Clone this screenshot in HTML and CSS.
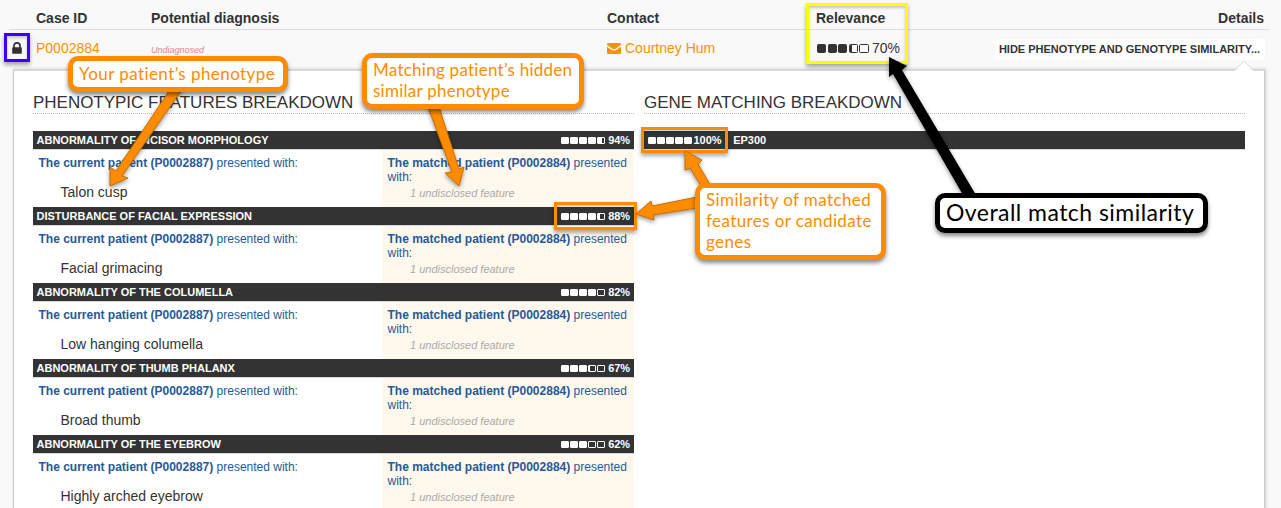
FILE: index.html
```html
<!DOCTYPE html>
<html lang="en">
<head>
<meta charset="utf-8">
<title>Patient similarity</title>
<link rel="stylesheet" href="styles.css">
</head>
<body>
<main class="page">
  <div class="grid-row head">
    <span></span><span>Case ID</span><span>Potential diagnosis</span><span>Contact</span><span>Relevance</span><span class="end">Details</span>
  </div>
  <div class="grid-row entry">
    <span class="lock"><svg width="10" height="12" viewBox="0 0 10 12"><path d="M2 6V3.8a3 3 0 0 1 6 0V6" fill="none" stroke="#333" stroke-width="1.7"/><rect x="0.2" y="5.3" width="9.6" height="6.4" rx=".7" fill="#333"/></svg></span>
    <a class="link">P0002884</a>
    <span class="undiagnosed">Undiagnosed</span>
    <a class="link contact"><svg width="14" height="11" viewBox="0 0 14 11"><path d="M0 1.2Q0 0 1.2 0H12.8Q14 0 14 1.2 14 2 12.5 3.1L8.2 6.1Q7 7 5.8 6.1L1.5 3.1Q0 2 0 1.2ZM0 3.4Q.5 3.9 5 7Q7 8.4 9 7Q13.5 3.9 14 3.4V9.8Q14 11 12.8 11H1.2Q0 11 0 9.8Z" fill="#f79300"/></svg>Courtney Hum</a>
    <span class="score dark"><i class="f"></i><i class="f"></i><i class="f"></i><i class="h"></i><i></i><b>70%</b></span>
    <span class="end"><button class="toggle">HIDE PHENOTYPE AND GENOTYPE SIMILARITY...</button></span>
  </div>
  <div class="panel">
    <section class="phenotypes">
      <h2>PHENOTYPIC FEATURES BREAKDOWN</h2>
      <article>
        <h3>ABNORMALITY OF INCISOR MORPHOLOGY<span class="score"><i class="f"></i><i class="f"></i><i class="f"></i><i class="f"></i><i class="m"></i><b>94%</b></span></h3>
        <div class="pair"><div class="mine"><p><b>The current patient (P0002887)</b> presented with:</p><div class="feature">Talon cusp</div></div><div class="theirs"><p><b>The matched patient (P0002884)</b> presented with:</p><em>1 undisclosed feature</em></div></div>
      </article>
      <article>
        <h3>DISTURBANCE OF FACIAL EXPRESSION<span class="score"><i class="f"></i><i class="f"></i><i class="f"></i><i class="f"></i><i class="h"></i><b>88%</b></span></h3>
        <div class="pair"><div class="mine"><p><b>The current patient (P0002887)</b> presented with:</p><div class="feature">Facial grimacing</div></div><div class="theirs"><p><b>The matched patient (P0002884)</b> presented with:</p><em>1 undisclosed feature</em></div></div>
      </article>
      <article>
        <h3>ABNORMALITY OF THE COLUMELLA<span class="score"><i class="f"></i><i class="f"></i><i class="f"></i><i class="f"></i><i></i><b>82%</b></span></h3>
        <div class="pair"><div class="mine"><p><b>The current patient (P0002887)</b> presented with:</p><div class="feature">Low hanging columella</div></div><div class="theirs"><p><b>The matched patient (P0002884)</b> presented with:</p><em>1 undisclosed feature</em></div></div>
      </article>
      <article>
        <h3>ABNORMALITY OF THUMB PHALANX<span class="score"><i class="f"></i><i class="f"></i><i class="f"></i><i class="q"></i><i></i><b>67%</b></span></h3>
        <div class="pair"><div class="mine"><p><b>The current patient (P0002887)</b> presented with:</p><div class="feature">Broad thumb</div></div><div class="theirs"><p><b>The matched patient (P0002884)</b> presented with:</p><em>1 undisclosed feature</em></div></div>
      </article>
      <article>
        <h3>ABNORMALITY OF THE EYEBROW<span class="score"><i class="f"></i><i class="f"></i><i class="f"></i><i></i><i></i><b>62%</b></span></h3>
        <div class="pair"><div class="mine"><p><b>The current patient (P0002887)</b> presented with:</p><div class="feature">Highly arched eyebrow</div></div><div class="theirs"><p><b>The matched patient (P0002884)</b> presented with:</p><em>1 undisclosed feature</em></div></div>
      </article>
    </section>
    <section class="genes">
      <h2>GENE MATCHING BREAKDOWN</h2>
      <h3><span class="score"><i class="f"></i><i class="f"></i><i class="f"></i><i class="f"></i><i class="f"></i><b>100%</b></span><span class="gene">EP300</span></h3>
    </section>
  </div>
</main>
<svg class="pointer" width="18" height="11" viewBox="0 0 18 11"><path d="M0 11 9 1 18 11Z" fill="#fff"/><path d="M0 10 9 1 18 10" fill="none" stroke="#ddd"/></svg>
<div class="frame lock-frame"></div>
<div class="frame relevance-frame"></div>
<div class="frame score-frame"></div>
<div class="frame gene-frame"></div>
<svg class="arrows" width="1281" height="508" viewBox="0 0 1281 508">
  <g fill="#ff8c00" stroke="#c96f00" stroke-width="1" stroke-linejoin="round">
    <path d="M171 88 116 171 110 167 110 186 128 178 122 176 183 88Z"/>
    <path d="M427 104 452 172 445 173 459 186 464 167 459 169 438 104Z"/>
    <path d="M697 197 652 206 651 201 636 214 654 220 653 215 697 208Z"/>
    <path d="M701 186 690 168 685 170 685 151 702 160 698 164 711 186Z"/>
  </g>
  <path d="M963 195 893 74 889 77 889 57 907 66 902 70 976 195Z" fill="#000"/>
</svg>
<div class="callout yours"><span>Your patient’s phenotype</span></div>
<div class="callout hidden"><span>Matching patient’s hidden</span><span>similar phenotype</span></div>
<div class="callout matched"><span>Similarity of matched</span><span>features or candidate</span><span>genes</span></div>
<div class="callout overall"><span>Overall match similarity</span></div>
</body>
</html>
```
FILE: styles.css
```css
* { box-sizing: border-box; }
body { margin: 0; width: 1281px; height: 508px; overflow: hidden; position: relative; background: #f9f9f9; color: #333; font: 14px/18px "Liberation Sans", Arial, sans-serif; }
h2, h3, p { margin: 0; }
span, a { white-space: nowrap; }
.page { padding: 0 12px 0 9px; }
.grid-row { display: grid; grid-template-columns: 27px 115px 456px 209px 210px minmax(0, 1fr); align-items: center; }
.head { height: 30px; padding-top: 6px; border-bottom: 1px solid #ddd; font-weight: bold; }
.end { text-align: right; padding-right: 5px; }
.entry { height: 39px; padding-bottom: 3px; }
.entry .end { display: flex; justify-content: flex-end; padding: 2px 4px 0 0; }
.lock { padding-left: 3px; display: flex; }
.link { color: #f79300; }
.contact { display: flex; align-items: center; gap: 4px; }
.undiagnosed { font-size: 9px; font-style: italic; color: #e8808c; padding-top: 3px; }
.toggle { flex: none; border: 0; border-radius: 3px; background: #fff; height: 21px; width: 270px; padding: 0 1px 0 0; font: bold 11px/21px "Liberation Sans", Arial, sans-serif; color: #333; white-space: nowrap; }
.panel { margin: 0 4px; height: 440px; border: 1px solid #ccc; border-top: 2px solid #d8d8d8; background: #fff; box-shadow: 1px 0 3px #ccc; display: flex; gap: 10px; padding: 20px 19px 0 19px; }
.phenotypes { width: 601px; flex: none; }
.genes { flex: 1; }
h2 { height: 23px; font: 17px/24px "Liberation Sans", Arial, sans-serif; letter-spacing: -.02px; border-bottom: 1px dotted #bbb; margin-bottom: 17px; }
h3 { display: flex; align-items: center; justify-content: space-between; height: 19px; background: #333; border-bottom: 1px solid #d4d8dd; color: #fff; font-size: 11px; line-height: 18px; padding: 0 4px 0 3.5px; }
.pair { display: flex; height: 57px; color: #245a9a; font-size: 12px; line-height: 14px; }
.mine { width: 349px; padding: 6px 0 0 5.5px; }
.theirs { flex: 1; background: #fff8ec; padding: 6px 0 0 5.5px; }
.feature { color: #333; font-size: 14px; padding: 13px 0 0 22px; line-height: 18px; }
em { display: block; font-size: 11px; color: #aaa; padding: 2px 0 0 22.5px; }
.score { display: flex; align-items: center; gap: 1px; }
.score i { width: 8px; height: 7px; border: 1px solid #fff; border-radius: 1px; }
.score .f { background: #fff; }
.score .m { background: linear-gradient(90deg, #fff 66%, transparent 66%); }
.score .h { background: linear-gradient(90deg, #fff 34%, transparent 34%); }
.score .q { background: linear-gradient(90deg, #fff 17%, transparent 17%); }
.score b { margin-left: 2.5px; letter-spacing: -.1px; }
.score.dark { gap: 1px; padding-left: 1px; }
.dark i { width: 9.6px; height: 9px; border-color: #333; border-radius: 1.5px; }
.dark .f { width: 9px; background: #333; margin-right: .6px; }
.dark .h { background: linear-gradient(90deg, #333 25%, transparent 25%) content-box; }
.dark b { font-weight: normal; margin-left: 2px; letter-spacing: 0; }
.genes h3 { justify-content: flex-start; gap: 11.5px; }
.genes .score b { margin-left: 1px; letter-spacing: 0; }
.pointer { position: absolute; left: 1235px; top: 60px; }
.frame { position: absolute; border: 3px solid #ff8c00; box-shadow: 0 3px 4px #0005, inset 0 2px 3px #0003; }
.lock-frame { left: 4px; top: 33px; width: 26px; height: 29px; border-color: #3c00ff; }
.relevance-frame { left: 806px; top: 3px; width: 102px; height: 61px; border-color: #fcff00; }
.score-frame { left: 554px; top: 202px; width: 83px; height: 28px; }
.gene-frame { left: 641px; top: 127px; width: 87px; height: 26px; }
.arrows { position: absolute; left: 0; top: 0; filter: drop-shadow(0 2px 2px #0006); }
.callout { position: absolute; display: flex; flex-direction: column; border: 5px solid #ff8c00; border-radius: 10px; background: #fff; color: #ff8c00; font: 17px/21px Lato, sans-serif; font-variant-ligatures: none; letter-spacing: .43px; box-shadow: 0 3px 4px #0007; }
.yours { left: 68px; top: 56px; width: 220px; height: 36px; padding: 2px 6px; }
.hidden { left: 362px; top: 53px; width: 222px; height: 56px; padding: 1px 6px; letter-spacing: .26px; }
.matched { left: 695px; top: 183px; width: 191px; height: 77px; padding: 1px 6px; letter-spacing: .4px; }
.overall { left: 935px; top: 193px; width: 273px; height: 40px; padding: 1px 6px; font-size: 23px; line-height: 26px; letter-spacing: .46px; color: #000; border-color: #000; }
```
